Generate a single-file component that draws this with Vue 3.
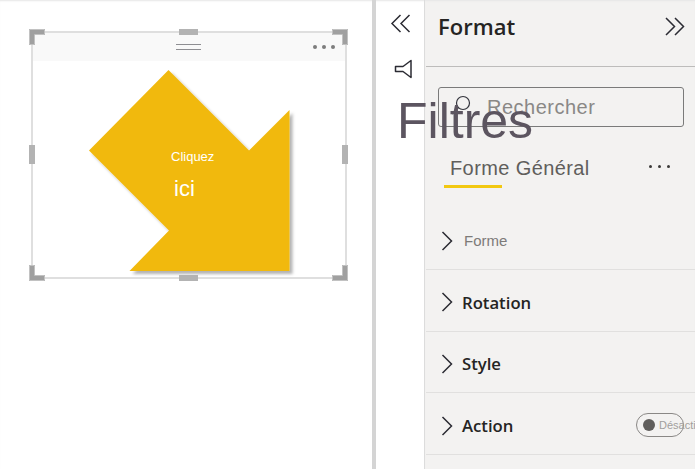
<template>
  <div class="page">
    <section class="canvas">
      <div class="visual">
        <div class="visual-head">
          <span class="grip"></span>
          <span class="dots"><i></i><i></i><i></i></span>
        </div>
        <svg class="shape" width="312" height="244" viewBox="33 33 312 244">
          <defs>
            <filter id="drop" x="-10%" y="-10%" width="120%" height="120%">
              <feDropShadow dx="3" dy="3" stdDeviation="1.5" flood-color="#000" flood-opacity="0.3" />
            </filter>
          </defs>
          <polygon
            points="168.5,70 249,150.5 289.5,110 289.5,271 129.5,271 169,230.5 89,150.5"
            fill="#f1b90c"
            filter="url(#drop)"
          />
        </svg>
        <span class="label-small">Cliquez</span>
        <span class="label-big">ici</span>

        <span
          v-for="h in handles"
          :key="h"
          class="handle"
          :class="h"
        ></span>
        <svg
          v-for="c in corners"
          :key="c"
          class="corner"
          :class="c"
          width="16"
          height="16"
          viewBox="0 0 16 16"
        >
          <path d="M0 0H16V6H6V16H0Z" fill="#a0a0a0" />
          <path d="M.5 .5H15.5V5.5H5.5V15.5H.5Z" fill="none" stroke="#c2c2c2" />
        </svg>
      </div>
    </section>

    <aside class="rail">
      <svg class="rail-chevrons" width="22" height="20" viewBox="0 0 22 20">
        <path d="M10.5 1 2 9.5 10.5 18M19.5 1 11 9.5 19.5 18" fill="none" stroke="#2b2b33" stroke-width="1.5" />
      </svg>
      <svg class="rail-funnel" width="20" height="22" viewBox="0 0 20 22">
        <path d="M1.5 7.5H9L17 1.5V18.5L9 12.5H1.5Z" fill="none" stroke="#2b2b33" stroke-width="1.5" stroke-linejoin="round" />
      </svg>
    </aside>

    <aside class="panel">
      <header class="panel-head">
        <h1>Format</h1>
        <svg width="22" height="20" viewBox="0 0 22 20">
          <path d="M2 1 10.5 9.5 2 18M11 1 19.5 9.5 11 18" fill="none" stroke="#2b2b33" stroke-width="1.5" />
        </svg>
      </header>

      <div class="search">
        <svg class="search-icon" width="20" height="22" viewBox="0 0 20 22">
          <circle cx="12" cy="8" r="6.5" fill="none" stroke="#33343c" stroke-width="1.2" />
          <path d="M7.5 12.5 1 19" stroke="#33343c" stroke-width="1.2" />
        </svg>
        <span>Rechercher</span>
      </div>

      <div class="tabs">
        <div class="tab">Forme Général</div>
        <span class="tab-more"><i></i><i></i><i></i></span>
      </div>

      <ul class="sections">
        <li v-for="s in sections" :key="s.name" :class="{ plain: s.plain }">
          <svg width="12" height="20" viewBox="0 0 12 20">
            <path d="M1.5 1 10.5 10 1.5 19" fill="none" stroke="#2b2b33" stroke-width="1.5" />
          </svg>
          <span class="section-name">{{ s.name }}</span>
          <div v-if="s.toggle" class="toggle">
            <span class="knob"></span>
            <span class="toggle-text">Désactivé</span>
          </div>
        </li>
      </ul>
    </aside>

    <div class="filters-title">Filtres</div>
  </div>
</template>

<script setup>
const handles = ['top', 'bottom', 'left', 'right']
const corners = ['tl', 'tr', 'bl', 'br']
const sections = [
  { name: 'Forme', plain: true },
  { name: 'Rotation' },
  { name: 'Style' },
  { name: 'Action', toggle: true }
]
</script>

<style>
html, body {
  margin: 0;
  overflow: hidden;
}
</style>

<style scoped>
.page {
  position: relative;
  display: flex;
  width: 695px;
  height: 469px;
  overflow: hidden;
  background: #fff;
  font-family: "Open Sans", "Liberation Sans", sans-serif;
  box-shadow: inset 0 2px 2px -1px #e6e6e6;
}

.canvas {
  flex: 0 0 372px;
  padding: 31px 0 0 31px;
  box-sizing: border-box;
}

.visual {
  position: relative;
  width: 316px;
  height: 248px;
  box-sizing: border-box;
  border: 2px solid #dfdfdf;
}

.visual-head {
  position: relative;
  height: 28px;
  background: #f9f9f9;
}

.grip {
  position: absolute;
  left: 143px;
  top: 11px;
  width: 25px;
  height: 4px;
  border-top: 1px solid #8e8e92;
  border-bottom: 1px solid #8e8e92;
}

.dots {
  position: absolute;
  right: 10px;
  top: 12px;
  display: flex;
  gap: 5px;
}

.dots i {
  width: 4px;
  height: 4px;
  border-radius: 50%;
  background: #7d7d7d;
}

.shape {
  position: absolute;
  left: 0;
  top: 0;
}

.label-small {
  position: absolute;
  left: 138px;
  top: 116px;
  color: #fff;
  font-family: "Liberation Sans", sans-serif;
  font-size: 13px;
  line-height: 15px;
}

.label-big {
  position: absolute;
  left: 141px;
  top: 144px;
  color: #fff;
  font-family: "Liberation Sans", sans-serif;
  font-size: 22px;
  line-height: 24px;
}

.handle {
  position: absolute;
  background: #b3b3b3;
}

.handle.top,
.handle.bottom {
  left: 146px;
  width: 19px;
  height: 6px;
}

.handle.top { top: -4px; }
.handle.bottom { bottom: -4px; }

.handle.left,
.handle.right {
  top: 112px;
  width: 6px;
  height: 19px;
}

.handle.left { left: -4px; }
.handle.right { right: -3px; }

.corner {
  position: absolute;
}

.corner.tl { left: -4px; top: -4px; }
.corner.tr { right: -3px; top: -4px; transform: scaleX(-1); }
.corner.bl { left: -4px; bottom: -4px; transform: scaleY(-1); }
.corner.br { right: -3px; bottom: -4px; transform: scale(-1); }

.rail {
  flex: 0 0 53px;
  display: flex;
  flex-direction: column;
  align-items: flex-start;
  box-sizing: border-box;
  border-left: 4px solid #d4d4d4;
  border-right: 1px solid #dcdcdc;
  padding: 14px 0 0 14px;
}

.rail-funnel {
  margin: 25px 0 0 4px;
}

.panel {
  flex: 1;
  min-width: 0;
  background: #f3f2f1;
  box-shadow: inset 0 2px 2px -1px #e6e6e6;
}

.panel-head {
  display: flex;
  align-items: center;
  justify-content: space-between;
  height: 67px;
  box-sizing: border-box;
  padding: 0 9px 13px 12px;
  margin-left: 1px;
  border-bottom: 1px solid #bdbcbb;
}

.panel-head h1 {
  margin: -2px 0 0;
  font-size: 22px;
  font-weight: 600;
  color: #252423;
}

.search {
  display: flex;
  align-items: center;
  gap: 16px;
  width: 246px;
  height: 40px;
  box-sizing: border-box;
  margin: 20px 0 0 13px;
  padding-left: 12px;
  border: 1px solid #7a7a7a;
  border-radius: 3px;
  font-family: "Liberation Sans", sans-serif;
  font-size: 20px;
  letter-spacing: 0.5px;
  color: #8a8886;
}

.search-icon {
  margin-top: -2px;
}

.tabs {
  display: flex;
  align-items: flex-start;
  justify-content: space-between;
  padding: 26px 25px 0 19px;
}

.tab {
  position: relative;
  padding: 3px 6px 8px 6px;
  font-family: "Liberation Sans", sans-serif;
  font-size: 20px;
  letter-spacing: 0.4px;
  line-height: 24px;
  color: #605e5c;
  white-space: nowrap;
}

.tab::after {
  content: "";
  position: absolute;
  left: 0;
  bottom: 0;
  width: 58px;
  height: 3px;
  background: #f2c811;
}

.tab-more {
  display: flex;
  gap: 6px;
  margin-top: 12px;
}

.tab-more i {
  width: 3px;
  height: 3px;
  border-radius: 50%;
  background: #3b3a39;
}

.sections {
  list-style: none;
  margin: 20.3px 0 0 1px;
  padding: 0;
}

.sections li {
  display: flex;
  align-items: center;
  gap: 9.5px;
  height: 61.67px;
  box-sizing: border-box;
  padding: 4px 0 0 14.5px;
  border-bottom: 1px solid #e1e0df;
  font-size: 16.7px;
  font-weight: 600;
  color: #252423;
}

.sections li.plain .section-name {
  margin-left: 2px;
  font-family: "Liberation Sans", sans-serif;
  font-size: 15px;
  font-weight: 400;
  color: #7d7b79;
}

.toggle {
  display: flex;
  align-items: center;
  width: 48px;
  height: 24px;
  box-sizing: border-box;
  margin: -2px 11px 0 auto;
  padding-left: 6px;
  border: 1px solid #8a8886;
  border-radius: 12px;
  white-space: nowrap;
}

.knob {
  flex: none;
  width: 12px;
  height: 12px;
  border-radius: 50%;
  background: #605e5c;
}

.toggle-text {
  margin-left: 4px;
  font-family: "Liberation Sans", sans-serif;
  font-size: 11px;
  font-weight: 400;
  color: #a19f9d;
}

.filters-title {
  position: absolute;
  left: 397px;
  top: 92px;
  font-family: "Liberation Sans", sans-serif;
  font-size: 50px;
  line-height: 58px;
  color: #5c5560;
}
</style>
